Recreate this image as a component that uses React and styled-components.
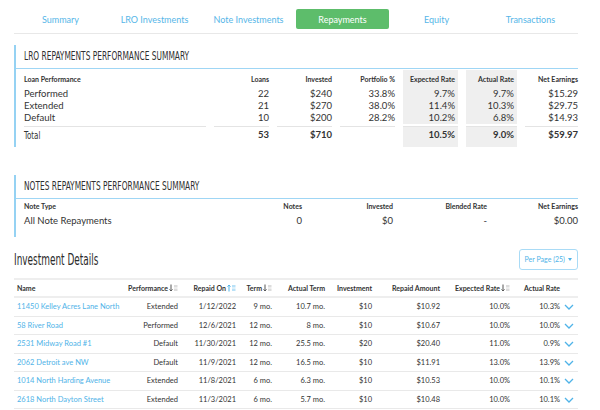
import styled, { createGlobalStyle } from "styled-components";

const GlobalStyle = createGlobalStyle`
  body {
    margin: 0;
    background: #ffffff;
    font-family: Lato, "Open Sans", sans-serif;
    color: #333333;
  }
`;

// stand-in for the narrow display face of the original: a condensed family squeezed a bit further
const condensed = `"Liberation Sans Narrow", "DejaVu Sans Condensed", "Roboto Condensed", sans-serif`;

const tabs = ["Summary", "LRO Investments", "Note Investments", "Repayments", "Equity", "Transactions"];

const lroRows = [
  { label: "Performed", loans: 22, invested: "$240", portfolio: "33.8%", expected: "9.7%", actual: "9.7%", net: "$15.29" },
  { label: "Extended", loans: 21, invested: "$270", portfolio: "38.0%", expected: "11.4%", actual: "10.3%", net: "$29.75" },
  { label: "Default", loans: 10, invested: "$200", portfolio: "28.2%", expected: "10.2%", actual: "6.8%", net: "$14.93" },
];

const details = [
  ["11450 Kelley Acres Lane North", "Extended", "1/12/2022", "9 mo.", "10.7 mo.", "$10", "$10.92", "10.0%", "10.3%"],
  ["58 River Road", "Performed", "12/6/2021", "12 mo.", "8 mo.", "$10", "$10.67", "10.0%", "10.0%"],
  ["2531 Midway Road #1", "Default", "11/30/2021", "12 mo.", "25.5 mo.", "$20", "$20.40", "11.0%", "0.9%"],
  ["2062 Detroit ave NW", "Default", "11/9/2021", "12 mo.", "16.5 mo.", "$10", "$11.91", "13.0%", "13.9%"],
  ["1014 North Harding Avenue", "Extended", "11/8/2021", "6 mo.", "6.3 mo.", "$10", "$10.53", "10.0%", "10.1%"],
  ["2618 North Dayton Street", "Extended", "11/3/2021", "6 mo.", "5.7 mo.", "$10", "$10.48", "10.0%", "10.1%"],
];

const columns = [
  { label: "Name", width: 106, left: true },
  { label: "Performance", width: 58, sort: "down" },
  { label: "Repaid On", width: 58, sort: "up" },
  { label: "Term", width: 36, sort: "down" },
  { label: "Actual Term", width: 53 },
  { label: "Investment", width: 47 },
  { label: "Repaid Amount", width: 68 },
  { label: "Expected Rate", width: 70, sort: "down" },
  { label: "Actual Rate", width: 50 },
  { label: "", width: 18 },
];

const SortIcon = ({ dir }) => {
  const active = dir === "up";
  const arrow = active ? "#4fb3e8" : "#555";
  const bars = active ? "#b9e1f7" : "#dcdcdc";
  return (
    <SortSvg width="9" height="8" viewBox="0 0 9 8">
      {active ? (
        <path d="M2 7.5V1M0.5 2.6L2 1l1.5 1.6" stroke={arrow} strokeWidth="1" fill="none" />
      ) : (
        <path d="M2 0.5V7M0.5 5.4L2 7l1.5-1.6" stroke={arrow} strokeWidth="1" fill="none" />
      )}
      <rect x="5" y="1" width="3.5" height="2.5" fill={bars} />
      <rect x="5" y="4.5" width="3.5" height="2.5" fill={bars} />
    </SortSvg>
  );
};

const Chevron = () => (
  <svg width="10" height="6" viewBox="0 0 10 6">
    <polyline points="1,1 5,5 9,1" fill="none" stroke="#4fb3e8" strokeWidth="1.3" />
  </svg>
);

const App = () => (
  <Page>
    <GlobalStyle />
    <TabBar>
      {tabs.map((t) => (
        <Tab key={t} active={t === "Repayments"}>{t}</Tab>
      ))}
    </TabBar>

    <Section gap={11}>
      <SectionTitle><Squeeze>LRO Repayments Performance Summary</Squeeze></SectionTitle>
      <LroGrid>
        <HeadCell left>Loan Performance</HeadCell>
        <HeadCell>Loans</HeadCell>
        <HeadCell>Invested</HeadCell>
        <HeadCell>Portfolio %</HeadCell>
        <HeadCell shaded>Expected Rate</HeadCell>
        <HeadCell shaded>Actual Rate</HeadCell>
        <HeadCell>Net Earnings</HeadCell>
        {lroRows.map((r) => (
          <Row key={r.label}>
            <Cell left>{r.label}</Cell>
            <Cell>{r.loans}</Cell>
            <Cell>{r.invested}</Cell>
            <Cell>{r.portfolio}</Cell>
            <Cell shaded>{r.expected}</Cell>
            <Cell shaded>{r.actual}</Cell>
            <Cell>{r.net}</Cell>
          </Row>
        ))}
        <TotalCell left><TotalLabel>Total</TotalLabel></TotalCell>
        <TotalCell>53</TotalCell>
        <TotalCell>$710</TotalCell>
        <TotalCell />
        <TotalCell shaded>10.5%</TotalCell>
        <TotalCell shaded>9.0%</TotalCell>
        <TotalCell>$59.97</TotalCell>
      </LroGrid>
    </Section>

    <Section gap={28}>
      <SectionTitle><Squeeze>Notes Repayments Performance Summary</Squeeze></SectionTitle>
      <NotesGrid>
        <NoteHead left>Note Type</NoteHead>
        <NoteHead>Notes</NoteHead>
        <NoteHead>Invested</NoteHead>
        <NoteHead>Blended Rate</NoteHead>
        <NoteHead>Net Earnings</NoteHead>
        <NoteCell left>All Note Repayments</NoteCell>
        <NoteCell>0</NoteCell>
        <NoteCell>$0</NoteCell>
        <NoteCell>-</NoteCell>
        <NoteCell>$0.00</NoteCell>
      </NotesGrid>
    </Section>

    <DetailsHeader>
      <DetailsTitle><Squeeze>Investment Details</Squeeze></DetailsTitle>
      <PerPage>
        Per Page (25)
        <Caret />
      </PerPage>
    </DetailsHeader>

    <DetailsTable>
      <colgroup>
        {columns.map((c, i) => (
          <col key={i} style={{ width: c.width }} />
        ))}
      </colgroup>
      <thead>
        <tr>
          {columns.map((c, i) => (
            <Th key={i} left={c.left}>
              {c.label}
              {c.sort && <SortIcon dir={c.sort} />}
            </Th>
          ))}
        </tr>
      </thead>
      <tbody>
        {details.map((row) => (
          <tr key={row[0]}>
            {row.map((v, i) =>
              i === 0 ? (
                <Td key={i} left>
                  <NameLink>{v}</NameLink>
                </Td>
              ) : (
                <Td key={i}>{v}</Td>
              )
            )}
            <Td center>
              <Chevron />
            </Td>
          </tr>
        ))}
      </tbody>
    </DetailsTable>
  </Page>
);

export default App;

const Page = styled.div`
  width: 600px;
  height: 410px;
  overflow: hidden;
  box-sizing: border-box;
  padding: 9px 22px 0 14px;
`;

const TabBar = styled.nav`
  display: grid;
  grid-template-columns: repeat(6, 1fr);
  padding-bottom: 4px;
  border-bottom: 1px solid #e8e8e8;
`;

const Tab = styled.div`
  height: 20px;
  margin-right: 1px;
  display: flex;
  align-items: center;
  justify-content: center;
  font-size: 9px;
  border-radius: 2px;
  color: ${(p) => (p.active ? "#ffffff" : "#56b6e8")};
  background: ${(p) => (p.active ? "#5dbd6b" : "transparent")};
`;

const Section = styled.section`
  margin-top: ${(p) => p.gap}px;
  border-left: 2px solid #95d2f3;
`;

const Squeeze = styled.span`
  display: inline-block;
  white-space: nowrap;
  transform: scaleX(0.72);
  transform-origin: left center;
`;

const SectionTitle = styled.h2`
  margin: 0;
  padding-left: 8px;
  height: 23px;
  line-height: 23px;
  font-family: ${condensed};
  font-size: 11.5px;
  font-weight: 400;
  text-transform: uppercase;
  color: #2f2f2f;
  border-bottom: 1.5px solid #9fd6f5;
`;

const LroGrid = styled.div`
  display: grid;
  grid-template-columns: 1fr 55px 55px 55px 55px 51px 53px;
  column-gap: 8px;
  padding: 1px 0 0 8px;
`;

const Row = styled.div`
  display: contents;
`;

const HeadCell = styled.div`
  height: 18px;
  line-height: 18px;
  font-size: 7px;
  font-weight: 700;
  color: #333;
  text-align: ${(p) => (p.left ? "left" : "right")};
  padding-right: ${(p) => (p.shaded ? "3px" : "0")};
  background: ${(p) => (p.shaded ? "#efefef" : "transparent")};
`;

const Cell = styled.div`
  height: 12px;
  line-height: 12px;
  font-size: 9.5px;
  color: #333;
  text-align: ${(p) => (p.left ? "left" : "right")};
  padding-right: ${(p) => (p.shaded ? "3px" : "0")};
  background: ${(p) => (p.shaded ? "#efefef" : "transparent")};
`;

const TotalCell = styled.div`
  margin-top: 1.5px;
  height: 19px;
  padding-top: 1px;
  line-height: 14px;
  font-size: 9.5px;
  font-weight: 700;
  color: #333;
  border-top: 1px solid #e4e4e4;
  text-align: ${(p) => (p.left ? "left" : "right")};
  padding-right: ${(p) => (p.shaded ? "3px" : "0")};
  background: ${(p) => (p.shaded ? "#efefef" : "transparent")};
`;

const TotalLabel = styled.span`
  display: inline-block;
  font-family: ${condensed};
  font-weight: 400;
  font-size: 10.5px;
  transform: scaleX(0.75);
  transform-origin: left center;
`;

const NotesGrid = styled.div`
  display: grid;
  grid-template-columns: 1fr 90px 91px 94px 91px;
  padding: 0 0 8.5px 8px;
`;

const NoteHead = styled.div`
  height: 14px;
  line-height: 14px;
  font-size: 7px;
  font-weight: 700;
  text-align: ${(p) => (p.left ? "left" : "right")};
`;

const NoteCell = styled.div`
  height: 16px;
  line-height: 16px;
  font-size: 9.5px;
  text-align: ${(p) => (p.left ? "left" : "right")};
`;

const DetailsHeader = styled.div`
  margin-top: 11px;
  height: 22px;
  display: flex;
  align-items: center;
  justify-content: space-between;
`;

const DetailsTitle = styled.h3`
  margin: 0;
  font-family: ${condensed};
  font-size: 16px;
  font-weight: 400;
  color: #2b2b2b;

  span { transform: scaleX(0.62); }
`;

const PerPage = styled.button`
  height: 21px;
  padding: 0 5px;
  display: flex;
  align-items: center;
  gap: 3px;
  border: 1px solid #a9dbf6;
  border-radius: 3px;
  background: #fff;
  color: #4fb3e8;
  font-family: Lato, sans-serif;
  font-size: 7px;
`;

const Caret = styled.span`
  width: 0;
  height: 0;
  border-left: 2.5px solid transparent;
  border-right: 2.5px solid transparent;
  border-top: 3px solid #4fb3e8;
`;

const DetailsTable = styled.table`
  margin-top: 8px;
  width: 100%;
  table-layout: fixed;
  border-collapse: collapse;
  border-top: 2px solid #eeeeee;
`;

const Th = styled.th`
  height: 16px;
  padding: 0;
  font-size: 7px;
  font-weight: 700;
  color: #333;
  white-space: nowrap;
  text-align: ${(p) => (p.left ? "left" : "right")};
  padding-left: ${(p) => (p.left ? "3px" : "0")};
  border-bottom: 2px solid #eeeeee;
`;

const SortSvg = styled.svg`
  margin-left: 1px;
  vertical-align: -1px;
`;

const Td = styled.td`
  height: 17.5px;
  padding: 0;
  font-size: 7.5px;
  color: #333;
  white-space: nowrap;
  text-align: ${(p) => (p.left ? "left" : p.center ? "center" : "right")};
  padding-left: ${(p) => (p.left ? "3px" : "0")};
  border-bottom: 1px solid #e9e9e9;
  svg { display: inline-block; vertical-align: middle; }
`;

const NameLink = styled.span`
  color: #4fb3e8;
`;
